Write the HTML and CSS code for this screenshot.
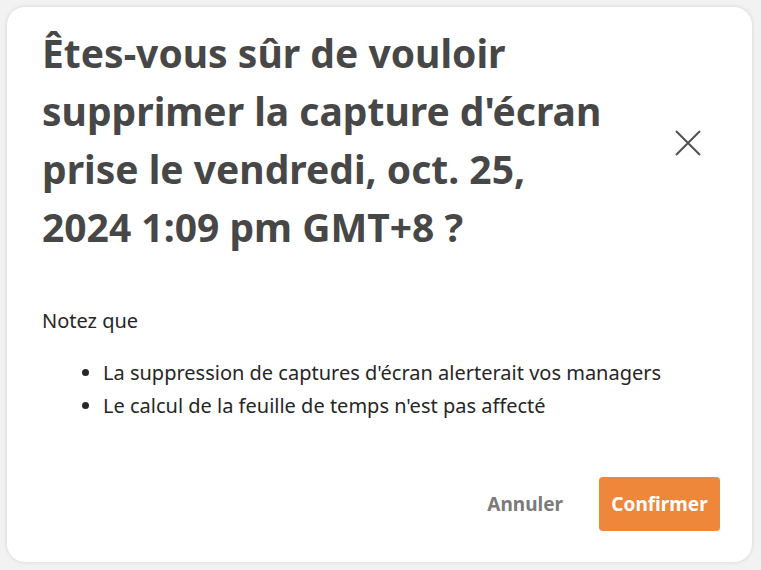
FILE: index.html
```html
<!DOCTYPE html>
<html lang="fr">
<head>
  <meta charset="UTF-8" />
  <title>Supprimer la capture</title>
  <link rel="stylesheet" href="styles.css">
</head>
<body>
  <div class="modal">
    <div class="modal-header">
      <h1 class="titre">Êtes-vous sûr de vouloir supprimer la capture d'écran prise le vendredi, oct. 25, 2024 1:09 pm GMT+8 ?</h1>
      <button class="fermer" aria-label="Fermer">
        <svg width="28" height="28" viewBox="0 0 28 28">
          <path d="M2 2 L26 26 M26 2 L2 26" stroke="#505050" stroke-width="2" fill="none" />
        </svg>
      </button>
    </div>
    <div class="modal-body">
      <p>Notez que</p>
      <ul>
        <li>La suppression de captures d'écran alerterait vos managers</li>
        <li>Le calcul de la feuille de temps n'est pas affecté</li>
      </ul>
    </div>
    <div class="modal-footer">
      <button class="annuler">Annuler</button>
      <button class="confirmer">Confirmer</button>
    </div>
  </div>
</body>
</html>
```

FILE: styles.css
```css
body {
  margin: 0;
  background-color: #f2f2f2;
  font-family: "Noto Sans", Arial, sans-serif;
  color: #262626;
}

.modal {
  margin: 7px;
  width: 745px;
  height: 555px;
  box-sizing: border-box;
  padding: 17px 32px 31px 35px;
  background-color: #fff;
  border-radius: 18px;
  box-shadow: 0 0 4px #00000022;
  display: flex;
  flex-direction: column;
}

.modal-header {
  display: flex;
  align-items: center;
  justify-content: space-between;
}

.titre {
  width: 570px;
  margin: 0;
  font-size: 39px;
  line-height: 58px;
  font-weight: 700;
  color: #474747;
}

.fermer {
  background: none;
  border: none;
  padding: 0;
  margin: 6px 18px 0 0;
  cursor: pointer;
}

.fermer svg {
  display: block;
}

.modal-body {
  flex: 1;
  padding-top: 48px;
  font-size: 20px;
}

.modal-body p {
  margin: 0 0 19px 0;
  line-height: 33px;
}

.modal-body ul {
  margin: 0;
  padding-left: 61px;
}

.modal-body li {
  line-height: 33px;
}

.modal-footer {
  display: flex;
  justify-content: flex-end;
  align-items: center;
  gap: 36px;
}

.annuler {
  background: none;
  border: none;
  padding: 0;
  font-family: inherit;
  font-size: 19px;
  font-weight: 700;
  color: #7b7b7b;
  cursor: pointer;
}

.confirmer {
  width: 121px;
  height: 54px;
  padding: 0;
  background-color: #ef873a;
  color: #fff;
  border: none;
  border-radius: 4px;
  font-family: inherit;
  font-size: 19px;
  font-weight: 700;
  cursor: pointer;
}
```
